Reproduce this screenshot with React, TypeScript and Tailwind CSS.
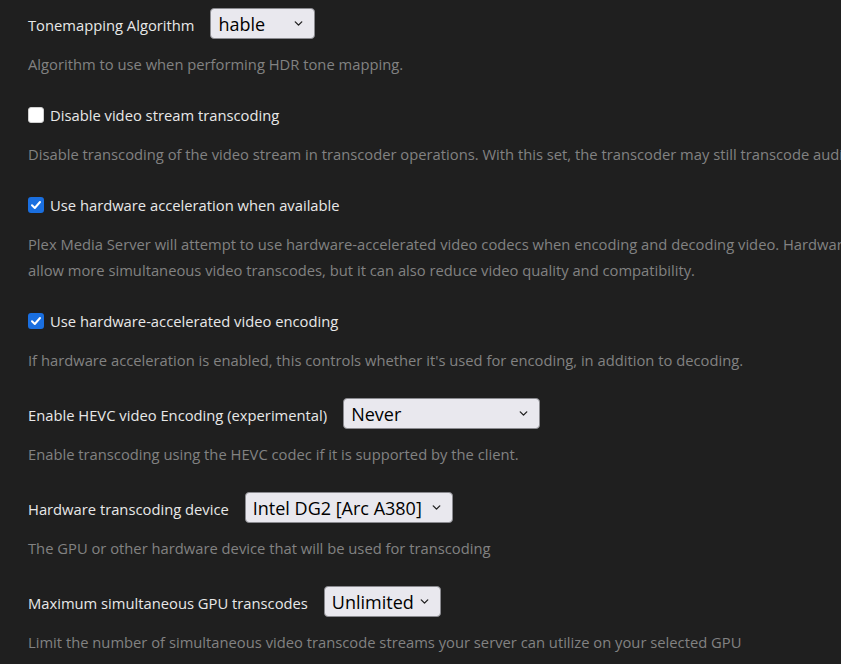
import { ChevronDown } from 'lucide-react';

interface SelectProps {
  value: string;
  width: string;
}

function FakeSelect({ value, width }: SelectProps) {
  return (
    <div
      className={`${width} h-[31px] flex items-center justify-between pl-[7px] pr-[9px] bg-[#e9e8ee] border border-[#8a8a8f] rounded-[4px] text-[18px] text-black font-['Segoe_UI','Open_Sans',sans-serif] leading-none`}
    >
      <span className="whitespace-nowrap">{value}</span>
      <ChevronDown className="w-[13px] h-[13px] text-[#222] shrink-0" strokeWidth={2.5} />
    </div>
  );
}

function Checkbox({ checked }: { checked: boolean }) {
  if (checked) {
    return (
      <span className="w-[16px] h-[16px] rounded-[3px] bg-[#1a6fe0] flex items-center justify-center shrink-0">
        <svg width="12" height="12" viewBox="0 0 12 12">
          <path d="M2 6.3 L4.8 9 L10 3" fill="none" stroke="white" strokeWidth="2" strokeLinecap="round" strokeLinejoin="round" />
        </svg>
      </span>
    );
  }
  return <span className="w-[16px] h-[16px] rounded-[3px] bg-white border border-[#cfcfcf] shrink-0" />;
}

function Desc({ children, mt = 'mt-[13px]' }: { children: React.ReactNode; mt?: string }) {
  return <p className={`${mt} text-[14.75px] leading-[26px] text-[#828282] whitespace-nowrap`}>{children}</p>;
}

function SelectRow({ label, value, width, desc }: { label: string; value: string; width: string; desc: React.ReactNode }) {
  return (
    <div className="mb-[25px]">
      <div className="flex items-center gap-4 h-[31px]">
        <span className="text-[14.75px] text-[#e8e8e8] pt-[3px]">{label}</span>
        <FakeSelect value={value} width={width} />
      </div>
      <Desc mt="mt-[12px]">{desc}</Desc>
    </div>
  );
}

function CheckRow({ label, checked, desc }: { label: string; checked: boolean; desc: React.ReactNode }) {
  return (
    <div className="mb-[25px]">
      <label className="flex items-center gap-[6px] h-[26px]">
        <Checkbox checked={checked} />
        <span className="text-[14.75px] text-[#e8e8e8]">{label}</span>
      </label>
      <Desc>{desc}</Desc>
    </div>
  );
}

export default function App() {
  return (
    <div className="w-[841px] h-[664px] overflow-hidden bg-[#1f1f1f] font-['Open_Sans',sans-serif]">
      <div className="pl-[28px] pt-[8px] w-[1100px]">
        <SelectRow
          label="Tonemapping Algorithm"
          value="hable"
          width="w-[105px]"
          desc="Algorithm to use when performing HDR tone mapping."
        />
        <CheckRow
          label="Disable video stream transcoding"
          checked={false}
          desc="Disable transcoding of the video stream in transcoder operations. With this set, the transcoder may still transcode audio streams."
        />
        <CheckRow
          label="Use hardware acceleration when available"
          checked={true}
          desc={
            <>
              Plex Media Server will attempt to use hardware-accelerated video codecs when encoding and decoding video. Hardware acceleration can make transcodes faster and
              <br />
              allow more simultaneous video transcodes, but it can also reduce video quality and compatibility.
            </>
          }
        />
        <CheckRow
          label="Use hardware-accelerated video encoding"
          checked={true}
          desc="If hardware acceleration is enabled, this controls whether it's used for encoding, in addition to decoding."
        />
        <SelectRow
          label="Enable HEVC video Encoding (experimental)"
          value="Never"
          width="w-[197px]"
          desc="Enable transcoding using the HEVC codec if it is supported by the client."
        />
        <SelectRow
          label="Hardware transcoding device"
          value="Intel DG2 [Arc A380]"
          width="w-[208px]"
          desc="The GPU or other hardware device that will be used for transcoding"
        />
        <SelectRow
          label="Maximum simultaneous GPU transcodes"
          value="Unlimited"
          width="w-[117px]"
          desc="Limit the number of simultaneous video transcode streams your server can utilize on your selected GPU"
        />
      </div>
    </div>
  );
}
